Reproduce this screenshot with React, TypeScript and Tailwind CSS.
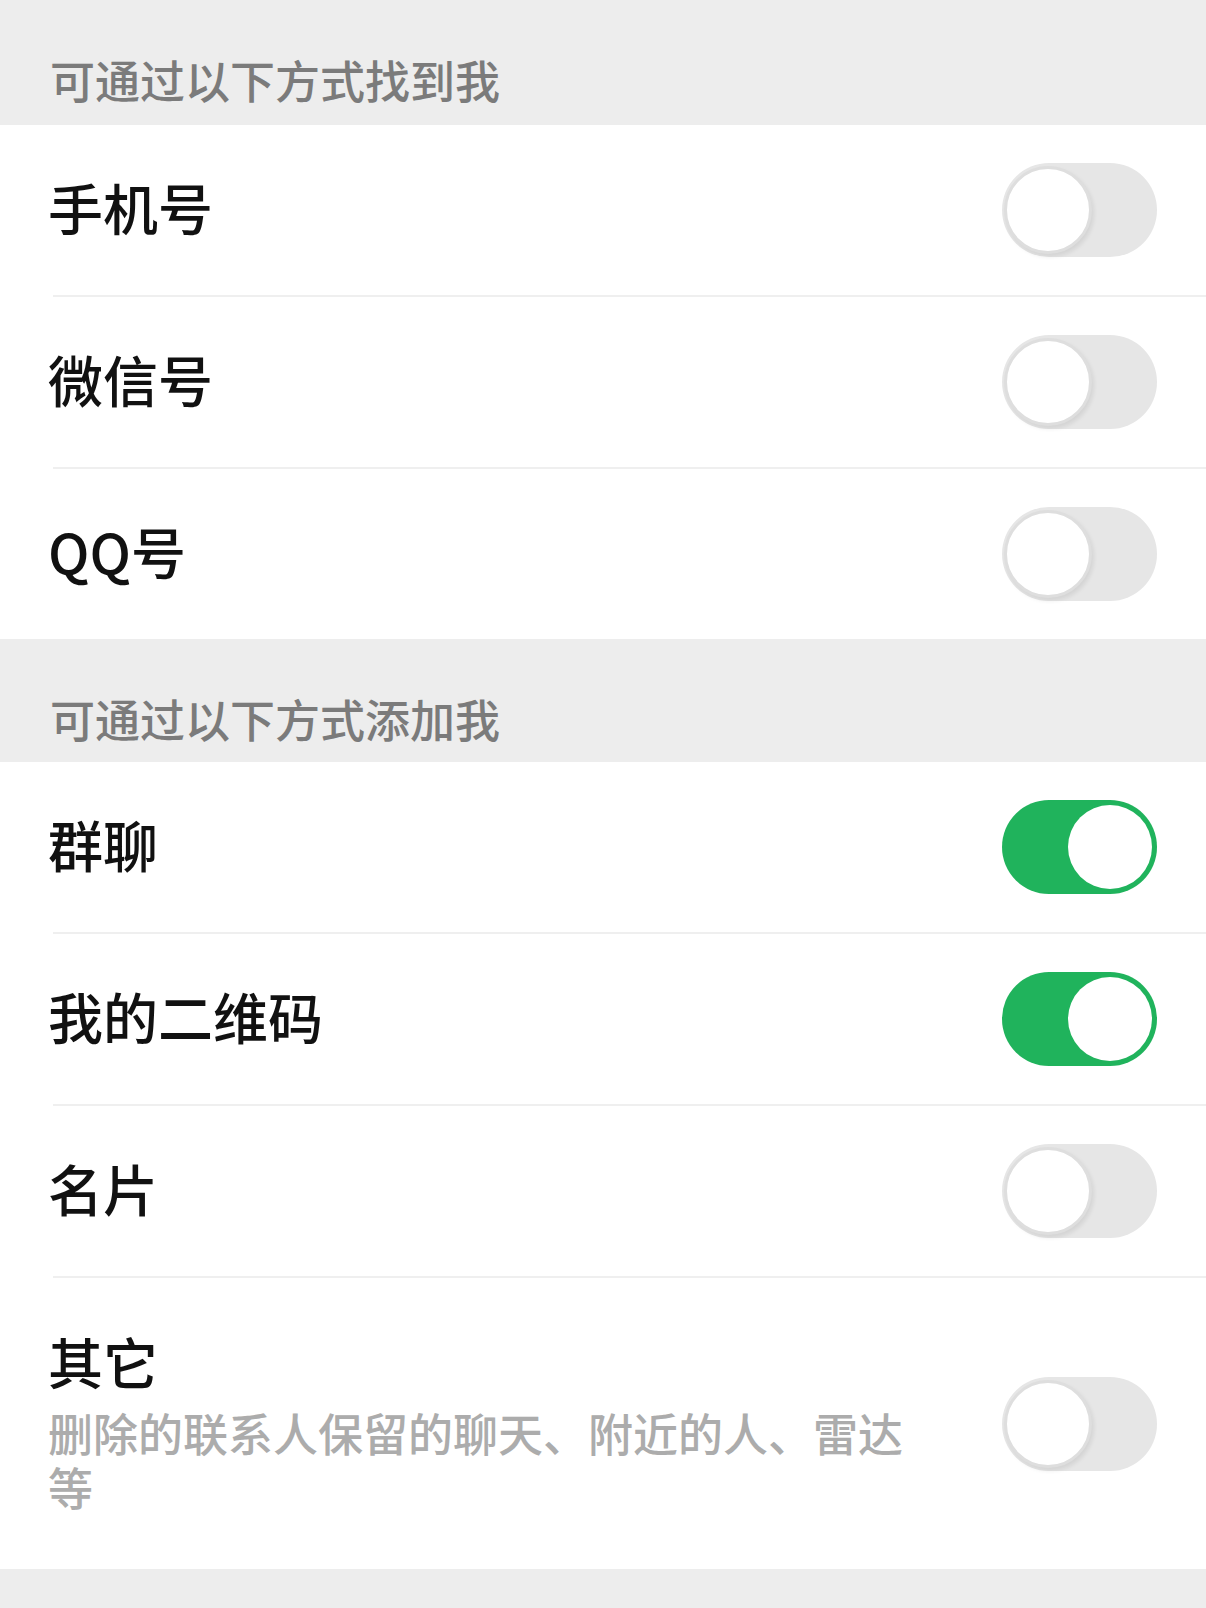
import React from 'react';

type Item = { label: string; on: boolean; desc?: string };

const findItems: Item[] = [
  { label: '手机号', on: false },
  { label: '微信号', on: false },
  { label: 'QQ号', on: false },
];

const addItems: Item[] = [
  { label: '群聊', on: true },
  { label: '我的二维码', on: true },
  { label: '名片', on: false },
  { label: '其它', on: false, desc: '删除的联系人保留的聊天、附近的人、雷达等' },
];

const Toggle: React.FC<{ on: boolean }> = ({ on }) =>
  on ? (
    <div className="flex h-[94px] w-[155px] shrink-0 items-center justify-end rounded-full bg-[#20b35c] pr-[5px]">
      <div className="h-[84px] w-[84px] rounded-full bg-white" />
    </div>
  ) : (
    <div className="flex h-[94px] w-[155px] shrink-0 items-center rounded-full bg-[#e6e6e6] pl-[2px]">
      <div className="h-[88px] w-[88px] rounded-full border-[3px] border-[#dedede] bg-white shadow-[2px_3px_4px_rgba(0,0,0,0.08)]" />
    </div>
  );

const Header: React.FC<{ text: string; first?: boolean }> = ({ text, first }) => (
  <div className={`${first ? 'h-[125px]' : 'h-[123px]'} bg-[#ededed] pl-[50px] pt-[53px]`}>
    <div className="text-[45px] font-medium leading-[54px] text-[#7b7b7b]">{text}</div>
  </div>
);

const Row: React.FC<{ item: Item; last: boolean }> = ({ item, last }) => (
  <div className="bg-white">
    {item.desc ? (
      <div className="flex h-[291px] items-center pl-[48px] pr-[49px]">
        <div className="flex-1 pb-[52px] pt-[46px]">
          <div className="text-[55px] font-medium leading-[66px] text-[#111]">{item.label}</div>
          <div className="mt-[13px] w-[880px] text-[45px] font-medium leading-[54px] text-[#acacac]">{item.desc}</div>
        </div>
        <Toggle on={item.on} />
      </div>
    ) : (
      <div className="flex h-[170px] items-center pl-[48px] pr-[49px]">
        <div className="flex-1 pb-[8px] text-[55px] font-medium leading-[66px] text-[#111]">{item.label}</div>
        <Toggle on={item.on} />
      </div>
    )}
    {!last && <div className="ml-[53px] h-[2px] bg-[#efefef]" />}
  </div>
);

const App: React.FC = () => {
  return (
    <div
      className="min-h-[1608px] w-[1206px] bg-[#ededed]"
      style={{ fontFamily: '"Noto Sans CJK SC", "Noto Sans", sans-serif' }}
    >
      <Header text="可通过以下方式找到我" first />
      {findItems.map((item, i) => (
        <Row key={item.label} item={item} last={i === findItems.length - 1} />
      ))}
      <Header text="可通过以下方式添加我" />
      {addItems.map((item, i) => (
        <Row key={item.label} item={item} last={i === addItems.length - 1} />
      ))}
    </div>
  );
};

export default App;
